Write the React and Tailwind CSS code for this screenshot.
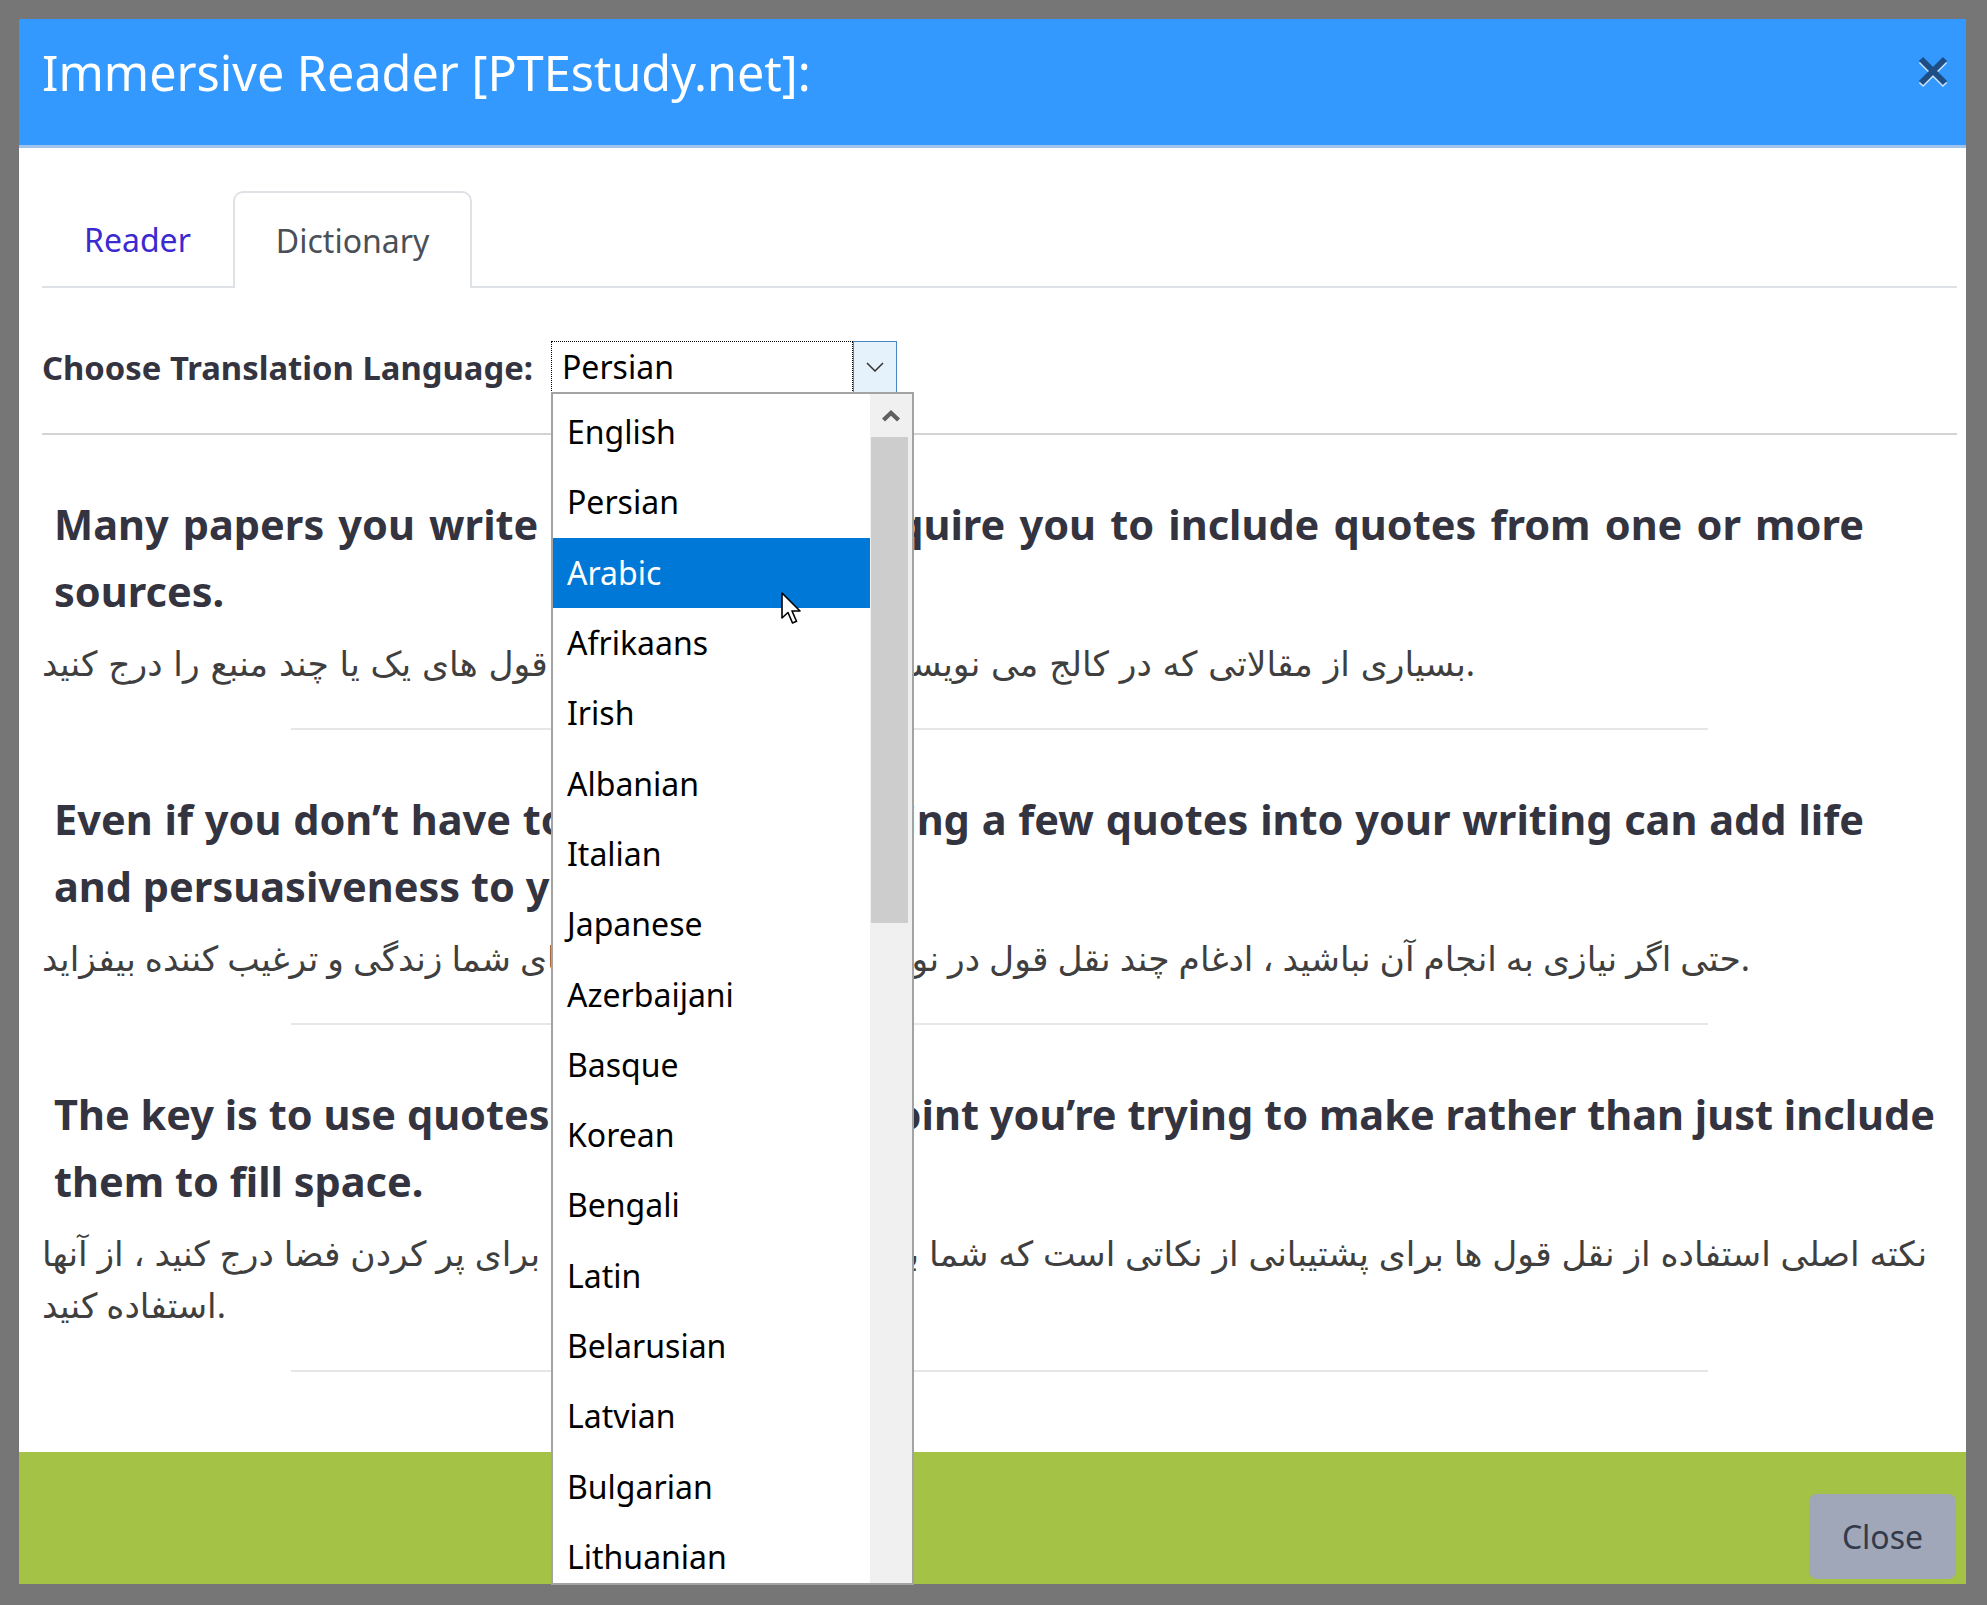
import React from "react";

const langs = [
  "English",
  "Persian",
  "Arabic",
  "Afrikaans",
  "Irish",
  "Albanian",
  "Italian",
  "Japanese",
  "Azerbaijani",
  "Basque",
  "Korean",
  "Bengali",
  "Latin",
  "Belarusian",
  "Latvian",
  "Bulgarian",
  "Lithuanian",
];

const blocks = [
  {
    en: [
      "Many papers you write in college will require you to include quotes from one or more",
      "sources.",
    ],
    enW: "w-[1810px]",
    fa: [
      "بسیاری از مقالاتی که در کالج می نویسید از شما می خواهد نقل قول های یک یا چند منبع را درج کنید.",
    ],
    faW: "w-[1433px]",
  },
  {
    en: [
      "Even if you don’t have to, also incorporating a few quotes into your writing can add life",
      "and persuasiveness to your paper.",
    ],
    enW: "w-[1810px]",
    fa: [
      "حتی اگر نیازی به انجام آن نباشید ، ادغام چند نقل قول در نوشتن می تواند به نوشته های شما زندگی و ترغیب کننده بیفزاید.",
    ],
    faW: "w-[1708px]",
  },
  {
    en: [
      "The key is to use quotes to support the point you’re trying to make rather than just include",
      "them to fill space.",
    ],
    enW: "w-[1881px]",
    fa: [
      "نکته اصلی استفاده از نقل قول ها برای پشتیبانی از نکاتی است که شما بیان می کنید نه اینکه فقط برای پر کردن فضا درج کنید ، از آنها",
      "استفاده کنید.",
    ],
    faW: "w-[1885px]",
  },
];

function Cursor() {
  return (
    <svg
      className="absolute left-[228px] top-[54px]"
      width="22"
      height="34"
      viewBox="0 0 22 34"
    >
      <path
        d="M1 1 L1 26 L7 20.5 L11.5 31 L15.5 29.3 L11 19 L19 19 Z"
        fill="#ffffff"
        stroke="#000000"
        strokeWidth="1.6"
        strokeLinejoin="round"
      />
    </svg>
  );
}

function Dropdown() {
  return (
    <div className="absolute left-0 top-[51px] z-20 flex h-[1193px] w-[363px] overflow-hidden border-2 border-[#a3a3a3] bg-white">
      <div className="flex flex-1 flex-col pt-[3px]">
        {langs.map((l) => (
          <div
            key={l}
            className={
              l === "Arabic"
                ? "relative flex h-[70.3px] shrink-0 items-center bg-[#0078d7] pl-[14px] text-[32px] text-white"
                : "flex h-[70.3px] shrink-0 items-center pl-[14px] text-[32px] text-black"
            }
          >
            {l}
            {l === "Arabic" && <Cursor />}
          </div>
        ))}
      </div>
      <div className="flex w-[42px] flex-col bg-[#f0f0f0]">
        <div className="flex h-[43px] items-center justify-center">
          <svg width="18" height="12" viewBox="0 0 18 12">
            <path d="M9 0 L18 8.5 L15 11.5 L9 5.8 L3 11.5 L0 8.5 Z" fill="#606060" />
          </svg>
        </div>
        <div className="ml-[1px] mr-[4px] h-[486px] bg-[#cdcdcd]" />
      </div>
    </div>
  );
}

export default function App() {
  return (
    <div
      className="h-[1605px] w-[1987px] bg-[#767676] pb-[21px] pl-[19px] pr-[21px] pt-[19px]"
      style={{ fontFamily: '"Noto Sans", "DejaVu Sans", sans-serif' }}
    >
      <div className="flex h-full w-full flex-col bg-white">
        {/* header */}
        <div className="flex h-[129px] shrink-0 items-center justify-between border-b-[3px] border-[#9fc3ea] bg-[#3399ff] pl-[23px] pr-[16px]">
          <div className="pb-[20px] text-[48.5px] leading-none text-white">
            Immersive Reader [PTEstudy.net]:
          </div>
          <div className="relative mb-[22px] h-[34px] w-[34px]">
            <svg className="absolute left-0 top-[2px]" width="34" height="34" viewBox="0 0 34 34">
              <path d="M5 5 L29 29 M29 5 L5 29" stroke="#cfe6ff" strokeWidth="6" />
            </svg>
            <svg className="absolute left-0 top-0" width="34" height="34" viewBox="0 0 34 34">
              <path d="M5 5 L29 29 M29 5 L5 29" stroke="#1d4f86" strokeWidth="6" />
            </svg>
          </div>
        </div>

        {/* body */}
        <div className="flex-1 pl-[23px] pr-[9px] pt-[43px]">
          {/* tabs */}
          <div className="flex border-b-2 border-[#dee2e6]">
            <div className="flex h-[95px] items-center px-[42px] pt-[2px] text-[32px] text-[#3a2ad0]">
              Reader
            </div>
            <div className="-mb-[2px] flex h-[97px] items-center rounded-t-[10px] border-2 border-b-0 border-[#dee2e6] bg-white px-[41px] text-[32px] text-[#495057]">
              Dictionary
            </div>
          </div>

          {/* language row */}
          <div className="mt-[53px] flex h-[52px] items-center">
            <div className="w-[509px] pt-[2px] text-[32.8px] font-bold text-[#33343f]">
              Choose Translation Language:
            </div>
            <div className="relative flex h-[52px] w-[346px]">
              <div className="flex flex-1 items-center border border-dotted border-black pl-[10px] text-[32px] text-black">
                Persian
              </div>
              <div className="flex w-[44px] items-center justify-center border border-[#4a86c0] bg-[#e5f1fb]">
                <svg width="18" height="10" viewBox="0 0 18 10">
                  <path d="M1 1 L9 9 L17 1" fill="none" stroke="#333" strokeWidth="1.5" />
                </svg>
              </div>
              <Dropdown />
            </div>
          </div>

          <div className="mt-[40px] h-[2px] bg-[#d3d3d3]" />

          {blocks.map((b, i) => (
            <div key={i}>
              <div className="mt-[56px] px-[12px] text-[41.5px] font-bold leading-[67px] text-[#33343f]">
                {b.en.map((line, j) => (
                  <div
                    key={j}
                    className={
                      j === 0
                        ? `${b.enW} whitespace-nowrap [text-align-last:justify]`
                        : "whitespace-nowrap"
                    }
                  >
                    {line}
                  </div>
                ))}
              </div>
              <div className="mt-[12px] text-[34.5px] leading-[52px] text-[#3f3f3f]">
                {b.fa.map((line, j) => (
                  <div
                    key={j}
                    className={
                      j === 0
                        ? `${b.faW} whitespace-nowrap [text-align-last:justify]`
                        : "whitespace-nowrap"
                    }
                  >
                    {line}
                  </div>
                ))}
              </div>
              <div className="mx-auto mt-[39px] h-[2px] w-[1417px] bg-[#e6e6e6]" />
            </div>
          ))}
        </div>

        {/* footer */}
        <div className="flex h-[132px] shrink-0 items-start justify-end bg-[#a4c245] pr-[10px] pt-[42px]">
          <div className="flex h-[85px] w-[147px] items-center justify-center rounded-[8px] bg-[#a0a7b8] text-[32px] text-[#343a4a]">
            Close
          </div>
        </div>
      </div>
    </div>
  );
}
